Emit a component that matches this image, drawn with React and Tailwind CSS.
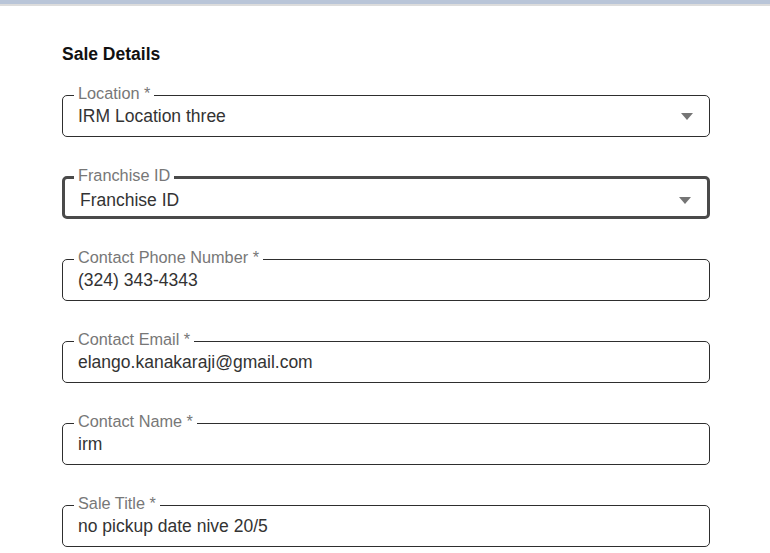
const FIELDS = [
  { label: "Location *", value: "IRM Location three", select: true },
  { label: "Franchise ID", value: "Franchise ID", select: true, focused: true },
  { label: "Contact Phone Number *", value: "(324) 343-4343" },
  { label: "Contact Email *", value: "elango.kanakaraji@gmail.com" },
  { label: "Contact Name *", value: "irm" },
  { label: "Sale Title *", value: "no pickup date nive 20/5" },
];

function Caret() {
  return (
    <svg width="12" height="7" viewBox="0 0 12 7" className="mr-[16px] shrink-0">
      <path d="M0 0 L12 0 L6 7 Z" fill="#757575" />
    </svg>
  );
}

function Field({ label, value, select, focused }) {
  return (
    <fieldset
      className={
        focused
          ? "m-0 min-w-0 rounded-[5px] border-[3px] border-[#4a4a4a] pl-[15px] pr-0 pt-[2px] pb-[6px]"
          : "m-0 min-w-0 rounded-[5px] border border-[#2e2e2e] pl-[15px] pr-0 pt-0 pb-[10px]"
      }
    >
      <legend
        className={
          focused
            ? "ml-[-6px] px-[4px] pb-[5px] text-[16.3px] leading-[16px] text-[#777777]"
            : "ml-[-4px] px-[4px] pb-[5px] text-[16.3px] leading-[16px] text-[#777777]"
        }
      >
        {label}
      </legend>
      <div className="flex items-center justify-between">
        <span className="text-[17.5px] leading-[20px] text-[#333333]">{value}</span>
        {select && <Caret />}
      </div>
    </fieldset>
  );
}

export default function App() {
  return (
    <div className="min-h-[553px] bg-white font-['Liberation_Sans',Arial,sans-serif]">
      <div className="h-[4px] bg-[#b9c5d8]" />
      <div className="h-[2px] bg-[#dcdcdc]" />
      <div className="pl-[62px] pr-[60px] pt-[38px]">
        <h2 className="text-[17.5px] leading-[20px] font-bold text-[#111111]">Sale Details</h2>
        <div className="mt-[21px] flex flex-col gap-[30px]">
          {FIELDS.map((f) => (
            <Field key={f.label} {...f} />
          ))}
        </div>
      </div>
    </div>
  );
}
